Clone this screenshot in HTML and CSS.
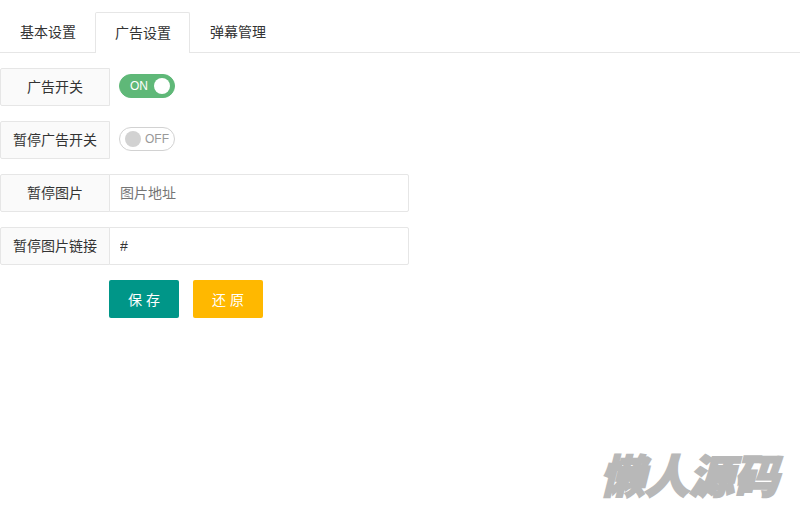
FILE: index.html
```html
<!DOCTYPE html>
<html lang="zh-CN">
  <head>
    <meta charset="UTF-8" />
    <title>广告设置</title>
    <link rel="stylesheet" href="styles.css">
  </head>
  <body>
    <div class="tabs">
      <a class="tab">基本设置</a>
      <a class="tab active">广告设置</a>
      <a class="tab">弹幕管理</a>
    </div>

    <form class="form">
      <div class="form-item">
        <label class="form-label">广告开关</label>
        <div class="switch on"><em>ON</em><i></i></div>
      </div>
      <div class="form-item">
        <label class="form-label">暂停广告开关</label>
        <div class="switch"><i></i><em>OFF</em></div>
      </div>
      <div class="form-item">
        <label class="form-label">暂停图片</label>
        <input class="form-input" type="text" placeholder="图片地址" />
      </div>
      <div class="form-item">
        <label class="form-label">暂停图片链接</label>
        <input class="form-input" type="text" value="#" />
      </div>
      <div class="form-actions">
        <button class="btn btn-save" type="button">保 存</button>
        <button class="btn btn-reset" type="button">还 原</button>
      </div>
    </form>

    <div class="watermark">懒人源码</div>
  </body>
</html>
```

FILE: styles.css
```css
body {
  margin: 0;
  height: 510px;
  padding-top: 12px;
  box-sizing: border-box;
  overflow: hidden;
  position: relative;
  background-color: #fff;
  color: #333;
  font-family: "Liberation Sans", "Noto Sans CJK SC", sans-serif;
  font-size: 14px;
}
.tabs {
  display: flex;
  height: 40px;
  border-bottom: 1px solid #e6e6e6;
}
.tab {
  padding: 0 20px;
  line-height: 40px;
  color: #333;
}
.active {
  background-color: #fff;
  border: 1px solid #e6e6e6;
  border-bottom: none;
  border-radius: 2px 2px 0 0;
  height: 41px;
  margin-left: -1px;
  padding: 0 18px 0 19px;
  box-sizing: border-box;
}
.form {
  padding-top: 15px;
}
.form-item {
  display: flex;
  align-items: flex-start;
  height: 38px;
  margin-bottom: 15px;
}
.form-label {
  width: 110px;
  height: 38px;
  line-height: 36px;
  box-sizing: border-box;
  text-align: center;
  background-color: #fafafa;
  border: 1px solid #e6e6e6;
  border-radius: 2px 0 0 2px;
  white-space: nowrap;
}
.form-input {
  width: 300px;
  height: 38px;
  box-sizing: border-box;
  margin-left: -1px;
  padding: 0 10px;
  border: 1px solid #e6e6e6;
  border-radius: 0 2px 2px 0;
  font: inherit;
  color: #333;
  outline: none;
}
.form-input::placeholder {
  color: #757575;
}
.switch {
  display: flex;
  align-items: center;
  justify-content: space-between;
  width: 56px;
  height: 24px;
  margin: 6px 0 0 9px;
  padding: 0 5px;
  box-sizing: border-box;
  border: 1px solid #d2d2d2;
  border-radius: 20px;
  font-size: 12px;
  color: #999;
}
.switch em {
  font-style: normal;
}
.switch i {
  width: 16px;
  height: 16px;
  border-radius: 50%;
  background-color: #d2d2d2;
}
.switch.on {
  border-color: #5fb878;
  background-color: #5fb878;
  color: #fff;
  padding: 0 4px 0 10px;
}
.switch.on i {
  background-color: #fff;
}
.form-actions {
  display: flex;
  gap: 14px;
  padding-left: 109px;
}
.btn {
  width: 70px;
  height: 38px;
  padding: 0;
  border: none;
  border-radius: 2px;
  color: #fff;
  font: inherit;
  cursor: pointer;
}
.btn-save {
  background-color: #009688;
}
.btn-reset {
  background-color: #ffb800;
}
.watermark {
  position: absolute;
  right: 22px;
  bottom: 9px;
  color: #b8b8b8;
  font-family: "Noto Sans CJK SC", sans-serif;
  font-size: 45px;
  font-weight: 900;
  font-style: italic;
  line-height: 1.2;
  letter-spacing: -0.5px;
  -webkit-text-stroke: 2px #b8b8b8;
}
```
